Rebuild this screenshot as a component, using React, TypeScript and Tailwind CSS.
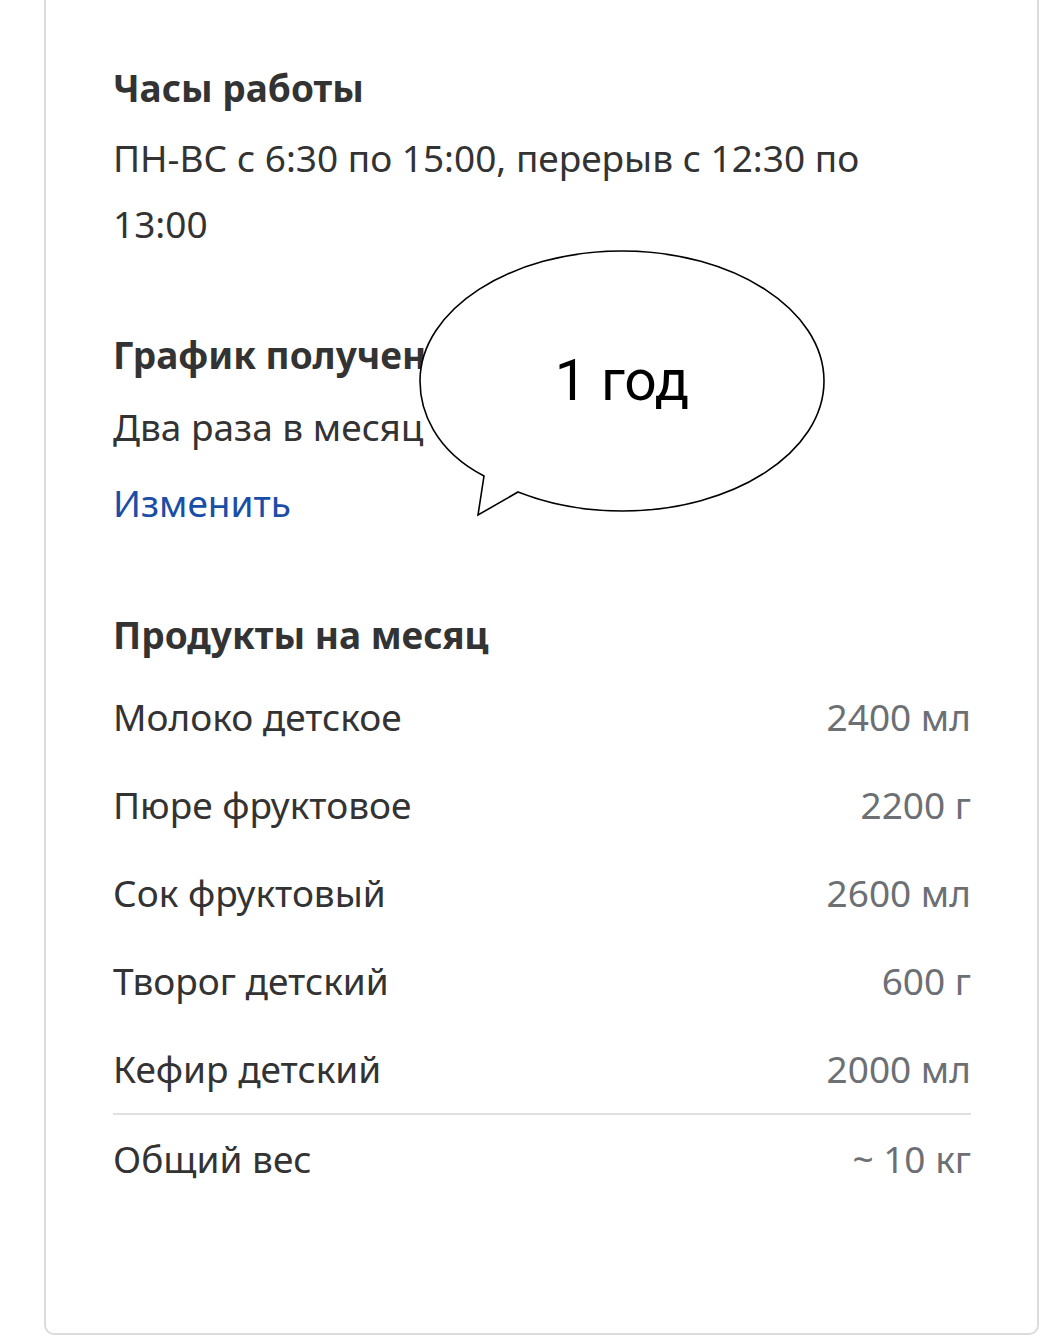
const PRODUCTS = [
  { name: 'Молоко детское', amount: '2400 мл' },
  { name: 'Пюре фруктовое', amount: '2200 г' },
  { name: 'Сок фруктовый', amount: '2600 мл' },
  { name: 'Творог детский', amount: '600 г' },
  { name: 'Кефир детский', amount: '2000 мл' },
];

function SpeechBubble() {
  return (
    <div className="absolute left-[330px] top-[250px] w-[452px] h-[268px]">
      <svg width="452" height="268" viewBox="0 0 452 268" className="absolute inset-0">
        <path
          d="M108 226 C 58 200 44 160 44 131 C 44 60 134 1 246 1 C 358 1 448 60 448 131 C 448 202 358 261 246 261 C 205 261 170 253 142 242 L 102 265 Z"
          fill="white"
          stroke="black"
          strokeWidth="1.6"
          strokeLinejoin="miter"
        />
      </svg>
      <div className="absolute left-[44px] top-[0px] w-[404px] h-[262px] flex items-center justify-center">
        <span className="text-[57px] leading-none text-black font-['Roboto',sans-serif] -mt-[2px]">1 год</span>
      </div>
    </div>
  );
}

export default function App() {
  return (
    <div className="min-h-screen bg-white font-['Noto_Sans',sans-serif] text-[#333333]">
      <div className="relative ml-[44px] w-[995px] h-[1335px] border-x-2 border-b-2 border-[#dcdcdc] rounded-b-[10px] pl-[67px] pr-[66px] pt-[64px]">
        {/* Hours */}
        <h2 className="text-[37px] leading-[48px] font-bold">Часы работы</h2>
        <p className="mt-[13px] max-w-[800px] text-[37px] leading-[66px]">
          ПН-ВС с 6:30 по 15:00, перерыв с 12:30 по 13:00
        </p>

        {/* Schedule */}
        <h2 className="mt-[74px] text-[37px] leading-[48px] font-bold">График получения</h2>
        <p className="mt-[15px] text-[37px] leading-[66px]">Два раза в месяц</p>
        <button className="mt-[10px] block text-[37px] leading-[66px] text-[#1a4ea6]">Изменить</button>

        {/* Products */}
        <h2 className="mt-[75px] text-[37px] leading-[48px] font-bold">Продукты на месяц</h2>
        <div className="mt-[14px]">
          {PRODUCTS.map((p) => (
            <div key={p.name} className="flex items-center justify-between h-[88px] text-[37px]">
              <span>{p.name}</span>
              <span className="text-[#6c6f73]">{p.amount}</span>
            </div>
          ))}
          <div className="h-[2px] bg-[#e0e0e0]" />
          <div className="flex items-center justify-between h-[88px] text-[37px]">
            <span>Общий вес</span>
            <span className="text-[#6c6f73]">~ 10 кг</span>
          </div>
        </div>

        <SpeechBubble />
      </div>
    </div>
  );
}
